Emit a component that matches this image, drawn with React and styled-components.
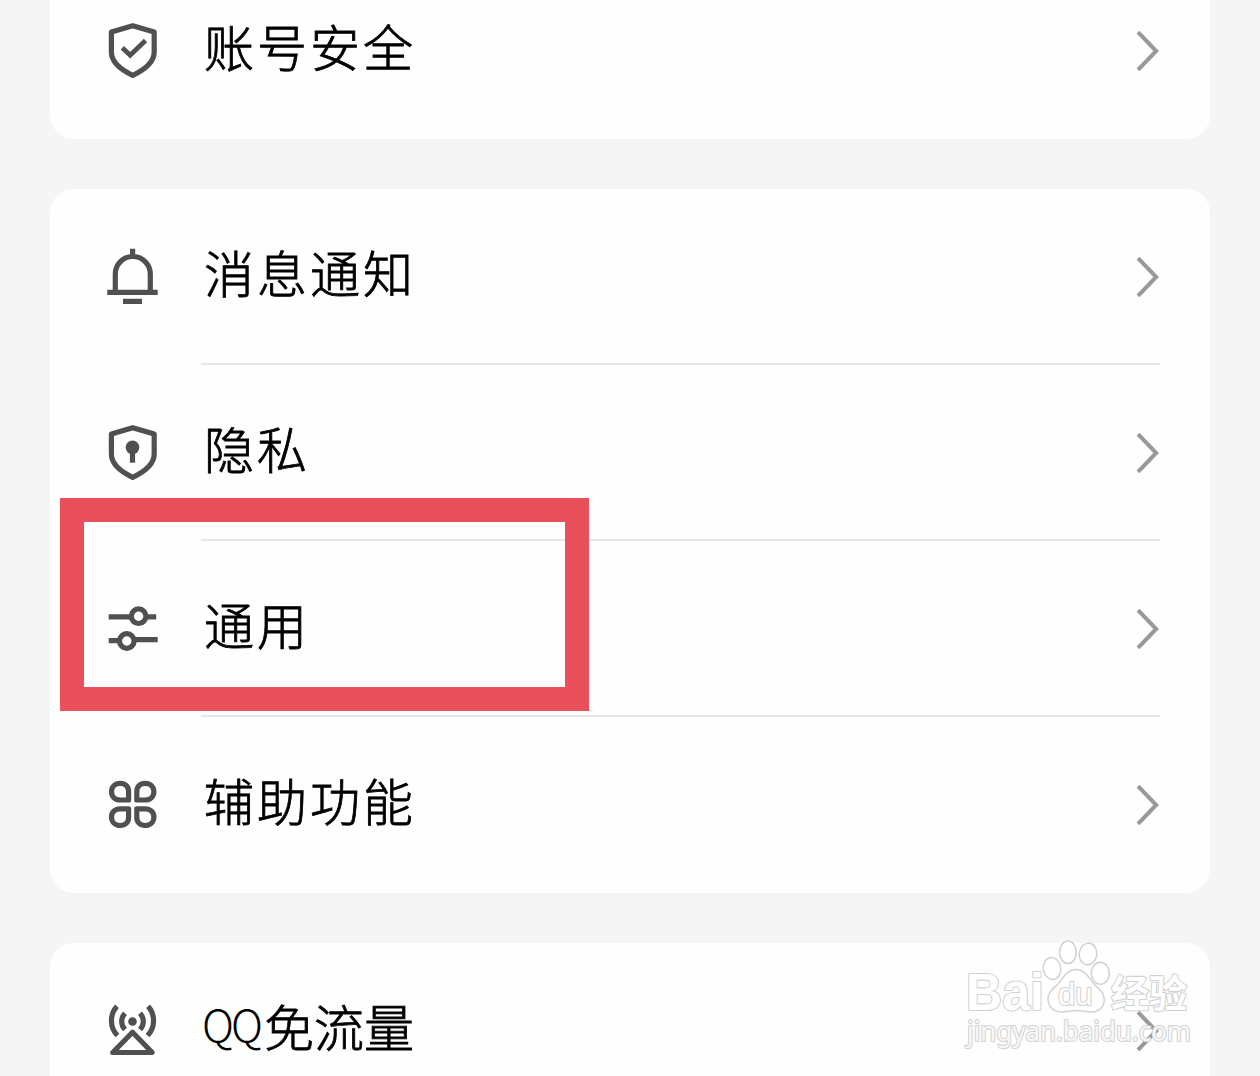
import React from 'react';
import styled, { createGlobalStyle } from 'styled-components';

const GlobalStyle = createGlobalStyle`
    body {
        margin: 0;
        background-color: #f5f5f5;
    }
    * {
        box-sizing: border-box;
    }
`;

const Screen = styled.div`
    position: relative;
    width: 1260px;
    height: 1076px;
    overflow: hidden;
    background-color: #f5f5f5;
    font-family: "Noto Sans CJK SC", sans-serif;
`;

const SettingList = styled.div`
    display: flex;
    flex-direction: column;
    gap: 50px;
    padding: 0 50px;
    /* the list is scrolled part way into the first card */
    margin-top: -37px;
`;

const Card = styled.div`
    border-radius: 24px;
    background-color: #fefefe;
`;

const Row = styled.div`
    display: flex;
    align-items: center;
    height: 176px;
    padding: 0 50px 0 55px;
`;

const RowIcon = styled.svg`
    flex: none;
    width: 56px;
    height: 60px;
    fill: none;
    stroke: #505050;
    stroke-width: 5.2;

    .solid {
        fill: #505050;
        stroke: none;
    }
`;

const RowContent = styled.div`
    display: flex;
    align-items: center;
    justify-content: space-between;
    flex: 1;
    height: 100%;
    margin-left: 40px;
    border-top: 2px solid transparent;
    border-bottom: 2px solid ${({ $divider }) => ($divider ? '#e6e6e6' : 'transparent')};
`;

const Label = styled.span`
    display: flex;
    align-items: center;
    padding-bottom: 12px;
    margin-left: 3px;
    color: #000;
    font-size: 50px;
    font-weight: 300;
    line-height: 60px;
    letter-spacing: ${({ $tight }) => ($tight ? '0' : '3px')};
    white-space: nowrap;
    -webkit-text-stroke: 0.8px #000;
`;

const Latin = styled.span`
    width: 62px;
    padding-bottom: 4px;
    margin-left: -2px;
    font-size: 44px;
    letter-spacing: -3px;
    -webkit-text-stroke: 0;
`;

const Arrow = styled.svg`
    flex: none;
    width: 24px;
    height: 44px;
    fill: none;
    stroke: #999;
    stroke-width: 4;
`;

const Highlight = styled.div`
    position: absolute;
    top: 498px;
    left: 60px;
    width: 529px;
    height: 213px;
    border: 24px solid #ea505c;
`;

const Watermark = styled.svg`
    position: absolute;
    top: 935px;
    left: 950px;
    width: 260px;
    height: 130px;
    overflow: visible;
    fill: #fff;
    stroke: #d2d2d2;
    stroke-width: 1.5;

    text {
        paint-order: stroke;
        stroke-width: 2.2;
        stroke-linejoin: round;
    }
    .brand {
        font: bold 51px "Liberation Sans", sans-serif;
    }
    .brand-cn {
        font: 700 38px "Noto Sans CJK SC", sans-serif;
    }
    .du {
        font: 31px "Liberation Sans", sans-serif;
    }
    .url {
        font: 28px "Noto Sans", sans-serif;
        fill-opacity: 0.85;
    }
`;

const SHIELD = 'M27.7 4.8L49.2 11V31C49.2 41.5 40 48.5 27.7 54.3C15.4 48.5 6.4 41.5 6.4 31V11Z';
const PETAL = 'M15.2 8.3C20.5 8.3 23.6 11.5 23.6 16.5V25H15.4C10.2 25 6.5 21.8 6.5 16.8C6.5 11.8 10.2 8.3 15.2 8.3Z';

const icons = {
    security: (
        <>
            <path d={SHIELD} strokeLinejoin="round" />
            <path d="M17.3 26.8L25.2 34.2L40.5 19.5" strokeWidth="4.8" />
        </>
    ),
    bell: (
        <>
            <path d="M10.3 45V27A17.5 17.5 0 0 1 45.3 27V45" />
            <path d="M2.3 45.4H52.7M18 54.4H37M27.6 1.7V9" />
        </>
    ),
    privacy: (
        <>
            <path d={SHIELD} strokeLinejoin="round" />
            <circle className="solid" cx="27.5" cy="24.4" r="6.8" />
            <path d="M27.5 26V39.7" />
        </>
    ),
    general: (
        <>
            <path d="M3.7 17.8H26.5M41 17.8H51.2M3.7 41.6H14.5M29 40.6H52.7" />
            <circle cx="33.6" cy="17.2" r="7.3" />
            <circle cx="21.8" cy="42" r="7.3" />
        </>
    ),
    assist: (
        <>
            <path d={PETAL} strokeLinejoin="round" />
            <path d={PETAL} strokeLinejoin="round" transform="matrix(-1 0 0 1 55.4 0)" />
            <path d={PETAL} strokeLinejoin="round" transform="matrix(1 0 0 -1 0 58.8)" />
            <path d={PETAL} strokeLinejoin="round" transform="matrix(-1 0 0 -1 55.4 58.8)" />
        </>
    ),
    traffic: (
        <>
            <path d="M27.5 31.2L47.2 51.5H7.8Z" strokeLinejoin="round" />
            <circle className="solid" cx="27.5" cy="20.5" r="4.3" />
            <path d="M12 5.3C4.5 13.5 4.5 26.5 12.5 34.5M43 5.3C50.5 13.5 50.5 26.5 42.5 34.5" />
            <path d="M20 12.2C15.6 17 15.6 23.8 20 28.6M35 12.2C39.4 17 39.4 23.8 35 28.6" />
        </>
    ),
};

const groups = [
    [{ icon: 'security', label: '账号安全' }],
    [
        { icon: 'bell', label: '消息通知' },
        { icon: 'privacy', label: '隐私' },
        { icon: 'general', label: '通用' },
        { icon: 'assist', label: '辅助功能' },
    ],
    [{ icon: 'traffic', latin: 'QQ', label: '免流量' }],
];

const SettingRow = ({ icon, latin, label, divider }) => {
    return (
        <Row>
            <RowIcon viewBox="0 0 56 60">{icons[icon]}</RowIcon>
            <RowContent $divider={divider}>
                <Label $tight={Boolean(latin)}>
                    {latin && <Latin>{latin}</Latin>}
                    {label}
                </Label>
                <Arrow viewBox="0 0 24 44">
                    <path d="M2 3.2L20.2 22L2 40.8" />
                </Arrow>
            </RowContent>
        </Row>
    );
};

const BaiduMark = () => (
    <Watermark viewBox="950 935 260 130">
        <text className="brand" x="966" y="1009.5" textLength="78" lengthAdjust="spacingAndGlyphs">Bai</text>
        <ellipse cx="1052" cy="968.5" rx="8.7" ry="11" transform="rotate(-8 1052 968.5)" />
        <ellipse cx="1068" cy="952.3" rx="8.3" ry="11.3" />
        <ellipse cx="1088" cy="954" rx="8.8" ry="10.8" transform="rotate(8 1088 954)" />
        <ellipse cx="1100.3" cy="973.3" rx="9" ry="11" />
        <path d="M1076 969.5C1086 969.5 1089 979 1094 984C1100 990 1104.5 993 1104.3 1000C1104 1008 1098 1012.5 1090 1012C1085 1011.6 1081 1010.5 1076 1010.5C1071 1010.5 1067 1012.2 1061 1012C1053 1011.8 1048 1006 1048 999C1048 992 1053 989 1058 984C1063 979 1066 969.5 1076 969.5Z" />
        <text className="du" x="1058" y="1004.5">du</text>
        <text className="brand-cn" x="1111" y="1007">经验</text>
        <text className="url" x="967" y="1041" textLength="224" lengthAdjust="spacingAndGlyphs">jingyan.baidu.com</text>
    </Watermark>
);

const App = () => {
    return (
        <Screen>
            <GlobalStyle />
            <SettingList>
                {groups.map((rows, i) => (
                    <Card key={i}>
                        {rows.map((row, j) => (
                            <SettingRow key={row.icon} {...row} divider={j < rows.length - 1} />
                        ))}
                    </Card>
                ))}
            </SettingList>
            <Highlight />
            <BaiduMark />
        </Screen>
    );
};

export default App;
